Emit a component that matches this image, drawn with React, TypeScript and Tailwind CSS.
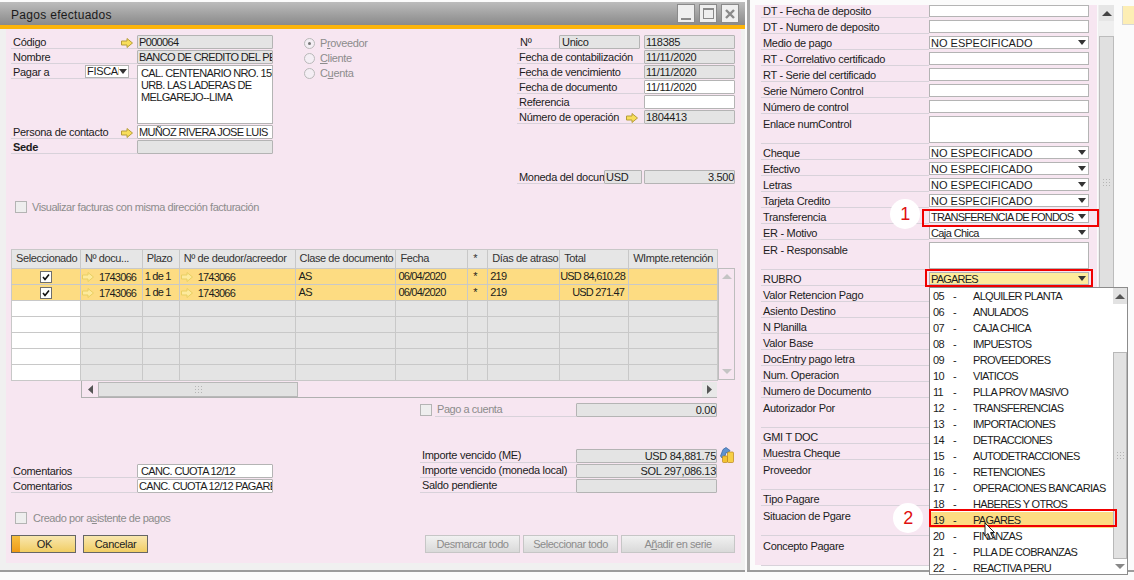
import React from "react";

const ink = "text-[#1c1c1c]";
const caps = "tracking-[-0.65px]";
const muted = "text-[#8c8c8c] tracking-[-0.45px]";

function Arrow({ pale }: { pale?: boolean }) {
  return (
    <svg width="12" height="10" viewBox="0 0 12 10" className="shrink-0">
      <path
        d="M0.5 3H6V0.5L11.5 5L6 9.5V7H0.5Z"
        fill={pale ? "#fdea9c" : "#f8de5a"}
        stroke={pale ? "#e8cf62" : "#b59d3a"}
      />
    </svg>
  );
}

function Caret() {
  return (
    <svg width="8" height="5" viewBox="0 0 8 5" className="shrink-0">
      <path d="M0 0H8L4 5Z" fill="#333" />
    </svg>
  );
}

function Field({ value, className, right }: { value?: string; className: string; right?: boolean }) {
  return (
    <div
      className={`h-[14px] border border-[#b4b4b4] rounded-[1px] leading-[12px] whitespace-nowrap overflow-hidden ${right ? "text-right" : "px-[1px]"} ${className}`}
    >
      {value}
    </div>
  );
}

function LeftRow({ label, value, bold, arrow, white }: { label: string; value?: string; bold?: boolean; arrow?: boolean; white?: boolean }) {
  return (
    <div className="flex h-[15px] items-end">
      <div className={`w-[126px] h-[15px] border-b border-[#d8d2da] flex items-center justify-between pl-[2px] pr-[4px] pt-[3px] ${bold ? "font-bold" : ""}`}>
        <span>{label}</span>
        {arrow && <Arrow />}
      </div>
      <Field value={value} className={`w-[136px] ${caps} ${white ? "bg-white" : "bg-[#e4e4e4]"}`} />
    </div>
  );
}

function InfoRow({ label, value, white, arrow }: { label: string; value?: string; white?: boolean; arrow?: boolean }) {
  return (
    <div className="flex h-[15px] items-end">
      <div className="w-[127px] h-[15px] border-b border-[#d8d2da] flex items-center justify-between pl-[2px] pr-[6px] pt-[3px] whitespace-nowrap">
        <span>{label}</span>
        {arrow && <Arrow />}
      </div>
      <Field value={value} className={`w-[91px] ${white ? "bg-white" : "bg-[#e4e4e4]"}`} />
    </div>
  );
}

function Radio({ label, on }: { label: React.ReactNode; on?: boolean }) {
  return (
    <div className="flex items-center h-[15px] gap-[5px] text-[#8c8c8c] tracking-[-0.35px]">
      <div className="w-[11px] h-[11px] rounded-full border border-[#b9b9b9] bg-[#f4eef4] flex items-center justify-center">
        {on && <div className="w-[3px] h-[3px] rounded-full bg-[#777]" />}
      </div>
      <span>{label}</span>
    </div>
  );
}

function Box({ checked }: { checked?: boolean }) {
  return (
    <div className={`w-[12px] h-[12px] border flex items-center justify-center ${checked ? "border-[#6e6e6e] bg-white" : "border-[#b4b4b4] bg-[#eeeeee]"}`}>
      {checked && (
        <svg width="8" height="8" viewBox="0 0 8 8">
          <path d="M1 4L3 6.5L7 1.5" fill="none" stroke="#111" strokeWidth="1.6" />
        </svg>
      )}
    </div>
  );
}

const cols = [
  { w: "w-[69px]", label: "Seleccionado", pad: "pl-[4px]" },
  { w: "w-[62px]", label: "Nº docu...", pad: "pl-[4px]" },
  { w: "w-[37px]", label: "Plazo", pad: "pl-[4px]" },
  { w: "w-[116px]", label: "Nº de deudor/acreedor", pad: "pl-[4px]" },
  { w: "w-[101px]", label: "Clase de documento", pad: "pl-[4px]" },
  { w: "w-[72px]", label: "Fecha", pad: "pl-[4px]" },
  { w: "w-[20px]", label: "*", pad: "pl-[5px]" },
  { w: "w-[72px]", label: "Días de atraso", pad: "pl-[4px]" },
  { w: "w-[69px]", label: "Total", pad: "pl-[4px]" },
  { w: "w-[89px]", label: "WImpte.retención", pad: "pl-[4px]" },
];

const rowsData = [
  { total: "USD 84,610.28" },
  { total: "USD 271.47" },
];

function PaymentsTable() {
  return (
    <div className="w-[707px] border-l border-t border-[#c8c8c8]">
      <div className="flex h-[19px] bg-[#e6e6e6] border-b border-[#c8c8c8] tracking-[-0.4px]">
        {cols.map((c) => (
          <div key={c.label} className={`${c.w} ${c.pad} border-r border-[#c8c8c8] leading-[17px] whitespace-nowrap overflow-hidden text-[#333]`}>
            {c.label}
          </div>
        ))}
      </div>
      {rowsData.map((r, i) => (
        <div key={i} className="flex h-[16px] bg-[#fddc82] border-b border-[#c8c8c8] leading-[14px] tracking-[-0.8px]">
          <div className="w-[69px] border-r border-[#c8c8c8] flex items-center justify-center"><Box checked /></div>
          <div className="w-[62px] border-r border-[#c8c8c8] flex items-center gap-[5px] pl-[1px]"><Arrow pale />1743066</div>
          <div className="w-[37px] border-r border-[#c8c8c8] pl-[2px]">1 de 1</div>
          <div className="w-[116px] border-r border-[#c8c8c8] flex items-center gap-[5px] pl-[1px]"><Arrow pale />1743066</div>
          <div className="w-[101px] border-r border-[#c8c8c8] pl-[3px]">AS</div>
          <div className="w-[72px] border-r border-[#c8c8c8] pl-[2px]">06/04/2020</div>
          <div className="w-[20px] border-r border-[#c8c8c8] pl-[5px]">*</div>
          <div className="w-[72px] border-r border-[#c8c8c8] pl-[2px]">219</div>
          <div className="w-[69px] border-r border-[#c8c8c8] text-right pr-[4px] whitespace-nowrap">{r.total}</div>
          <div className="w-[89px] border-r border-[#c8c8c8]" />
        </div>
      ))}
      {[0, 1, 2, 3, 4].map((i) => (
        <div key={i} className="flex h-[16px] bg-[#e4e4e4] border-b border-[#c8c8c8]">
          {cols.map((c, j) => (
            <div key={c.label} className={`${c.w} border-r border-[#c8c8c8] ${j === 0 ? "bg-white" : ""}`} />
          ))}
        </div>
      ))}
    </div>
  );
}

function Grip() {
  return (
    <svg width="7" height="7" viewBox="0 0 7 7">
      <path d="M0 0h1v1H0zM3 0h1v1H3zM6 0h1v1H6zM0 3h1v1H0zM3 3h1v1H3zM6 3h1v1H6zM0 6h1v1H0zM3 6h1v1H3zM6 6h1v1H6z" fill="#b5b5b5" />
    </svg>
  );
}

function Coins() {
  return (
    <svg width="14" height="16" viewBox="0 0 14 16" className="shrink-0 ml-[3px]">
      <path d="M0.5 9L3 2.5L6 0.5L10 3.5L8 6L6 5.5L5 9L2 11Z" fill="#5f93cf" stroke="#2f5f9e" strokeWidth="0.7" />
      <rect x="2.5" y="9" width="5" height="6.5" rx="1" fill="#f3c230" stroke="#b9851a" strokeWidth="0.7" />
      <rect x="7.5" y="5" width="6" height="10.5" rx="1" fill="#f7cf45" stroke="#b9851a" strokeWidth="0.7" />
    </svg>
  );
}

function GreyButton({ className, children }: { className: string; children: React.ReactNode }) {
  return (
    <div className={`h-[18px] border border-[#c6c6c6] bg-linear-to-b from-[#f1f1f1] to-[#d9d9d9] ${muted} flex items-center justify-center ${className}`}>
      {children}
    </div>
  );
}

function LeftWindow() {
  return (
    <div className="w-[745px] h-[570px] mt-[2px] flex flex-col border-b-2 border-[#9c9c9c] bg-[#f0f0f0]">
      <div className="h-[23px] shrink-0 bg-linear-to-b from-[#bcbcbc] to-[#8a8a8a] flex items-center justify-between pl-[11px] pr-[6px]">
        <span className="text-[12px] tracking-[0.3px] text-[#1a1a1a] pt-[3px]">Pagos efectuados</span>
        <div className="flex gap-[4px]">
          <div className="w-[18px] h-[19px] bg-[#efefef] border border-[#8a8a8a] flex items-end justify-center pb-[2px]">
            <div className="w-[10px] h-[2px] bg-[#8a8a8a]" />
          </div>
          <div className="w-[18px] h-[19px] bg-[#efefef] border border-[#8a8a8a] flex items-center justify-center">
            <div className="w-[11px] h-[11px] border border-[#8a8a8a] border-t-2" />
          </div>
          <div className="w-[18px] h-[19px] bg-[#efefef] border border-[#8a8a8a] flex items-center justify-center">
            <svg width="10" height="10" viewBox="0 0 10 10">
              <path d="M1 1L9 9M9 1L1 9" stroke="#8a8a8a" strokeWidth="2.4" />
            </svg>
          </div>
        </div>
      </div>
      <div className="h-[4px] shrink-0 bg-[#fbb40a]" />
      <div className="ml-[6px] w-[735px] h-[534px] bg-[#f7e6f1] pl-[5px] pt-[5px]">
        <div className="flex h-[120px]">
          <div className="w-[263px]">
            <LeftRow label="Código" value="P000064" arrow />
            <LeftRow label="Nombre" value="BANCO DE CREDITO DEL PERU" />
            <div className="flex h-[60px]">
              <div className="w-[126px] h-[15px] flex border-b border-[#d8d2da]">
                <span className="w-[74px] pl-[2px] pt-[1px] leading-[14px]">Pagar a</span>
                <div className="w-[44px] h-[13px] mt-[1px] bg-white border border-[#b4b4b4] flex items-center overflow-hidden pl-[1px] leading-[11px]">
                  <span className="w-[32px] overflow-hidden">FISCAL</span>
                  <Caret />
                </div>
              </div>
              <div className={`w-[136px] h-[59px] mt-[1px] bg-white border border-[#b4b4b4] pl-[3px] pt-[1px] leading-[12px] whitespace-nowrap overflow-hidden ${caps}`}>
                CAL. CENTENARIO NRO. 156<br />URB. LAS LADERAS DE<br />MELGAREJO--LIMA
              </div>
            </div>
            <LeftRow label="Persona de contacto" value="MUÑOZ RIVERA JOSE LUIS" arrow white />
            <LeftRow label="Sede" bold />
          </div>
          <div className="w-[243px] pl-[30px] pt-[2px]">
            <Radio on label={<>P<span className="underline">r</span>oveedor</>} />
            <Radio label={<><span className="underline">C</span>liente</>} />
            <Radio label={<>C<span className="underline">u</span>enta</>} />
          </div>
          <div className="w-[218px]">
            <div className="flex h-[15px] items-end">
              <div className="w-[42px] h-[15px] border-b border-[#d8d2da] pl-[3px] pt-[2px] leading-[13px]">Nº</div>
              <Field value="Unico" className="w-[81px] bg-[#e4e4e4] pl-[2px]" />
              <div className="w-[4px]" />
              <Field value="118385" className="w-[91px] bg-[#e4e4e4]" />
            </div>
            <InfoRow label="Fecha de contabilización" value="11/11/2020" />
            <InfoRow label="Fecha de vencimiento" value="11/11/2020" />
            <InfoRow label="Fecha de documento" value="11/11/2020" white />
            <InfoRow label="Referencia" white />
            <InfoRow label="Número de operación" value="1804413" arrow />
            <div className="flex h-[15px] items-end mt-[45px]">
              <div className="w-[87px] h-[15px] border-b border-[#d8d2da] pl-[2px] pt-[2px] whitespace-nowrap overflow-hidden leading-[13px]">Moneda del documento</div>
              <Field value="USD" className="w-[38px] bg-[#e4e4e4]" />
              <div className="w-[2px]" />
              <Field value="3.500" right className="w-[91px] bg-[#e4e4e4]" />
            </div>
          </div>
        </div>
        <div className={`flex items-center gap-[5px] pl-[4px] mt-[46px] h-[14px] ${muted}`}>
          <Box />
          <span>Visualizar facturas con misma dirección facturación</span>
        </div>
        <div className="flex mt-[35px]">
          <PaymentsTable />
          <div className="w-[17px] h-[112px] mt-[19px] border border-[#bdbdbd] flex flex-col items-center justify-between py-[5px]">
            <svg width="10" height="5" viewBox="0 0 10 5"><path d="M5 0L10 5H0Z" fill="#c4c4c4" /></svg>
            <svg width="10" height="5" viewBox="0 0 10 5"><path d="M0 0H10L5 5Z" fill="#c4c4c4" /></svg>
          </div>
        </div>
        <div className="ml-[70px] w-[636px] h-[17px] border-l border-b border-[#b0b0b0] flex items-center">
          <div className="w-[16px] flex justify-center">
            <svg width="5" height="9" viewBox="0 0 5 9"><path d="M5 0V9L0 4.5Z" fill="#555" /></svg>
          </div>
          <div className="w-[200px] h-[15px] bg-[#e2e2e2] border border-[#b8b8b8] flex items-center justify-center"><Grip /></div>
          <div className="flex-1" />
          <div className="w-[15px] h-[15px] bg-[#e8e8e8] flex items-center justify-center">
            <svg width="5" height="9" viewBox="0 0 5 9"><path d="M0 0V9L5 4.5Z" fill="#555" /></svg>
          </div>
        </div>
        <div className="flex h-[137px]">
          <div className="w-[409px] pt-[65px]">
            <div className="flex h-[15px] items-end">
              <div className="w-[126px] h-[15px] border-b border-[#d8d2da] pl-[2px] pt-[2px] leading-[13px]">Comentarios</div>
              <Field value="CANC. CUOTA 12/12" className={`w-[136px] bg-white pl-[3px] ${caps}`} />
            </div>
            <div className="flex h-[15px] items-end">
              <div className="w-[126px] h-[15px] border-b border-[#d8d2da] pl-[2px] pt-[2px] leading-[13px]">Comentarios</div>
              <Field value="CANC. CUOTA 12/12 PAGARES" className={`w-[136px] bg-white ${caps}`} />
            </div>
            <div className={`flex items-center gap-[6px] pl-[4px] mt-[18px] h-[14px] ${muted}`}>
              <Box />
              <span>Creado por a<span className="underline">s</span>istente de pagos</span>
            </div>
          </div>
          <div className="w-[320px] pt-[4px]">
            <div className="flex h-[15px] items-end">
              <div className="pb-[1px] w-[15px]"><Box /></div>
              <div className={`w-[141px] h-[15px] border-b border-[#d8d2da] pl-[2px] leading-[15px] ${muted}`}>Pago a cuenta</div>
              <Field value="0.00" right className="w-[141px] bg-[#e4e4e4]" />
            </div>
            <div className="flex h-[15px] items-end mt-[31px]">
              <div className="w-[156px] h-[15px] border-b border-[#d8d2da] pl-[2px] leading-[15px]">Importe vencido (ME)</div>
              <Field value="USD 84,881.75" right className="w-[141px] bg-[#e4e4e4]" />
              <Coins />
            </div>
            <div className="flex h-[15px] items-end">
              <div className="w-[156px] h-[15px] border-b border-[#d8d2da] pl-[2px] leading-[15px]">Importe vencido (moneda local)</div>
              <Field value="SOL 297,086.13" right className="w-[141px] bg-[#e4e4e4]" />
            </div>
            <div className="flex h-[15px] items-end">
              <div className="w-[156px] h-[15px] border-b border-[#d8d2da] pl-[2px] leading-[15px]">Saldo pendiente</div>
              <Field className="w-[141px] bg-[#e4e4e4]" />
            </div>
          </div>
        </div>
        <div className="flex pr-[6px]">
          <div className="relative w-[65px] h-[18px] border border-[#666] bg-linear-to-b from-[#f9e7ae] to-[#f1cd62] flex items-center justify-center pl-[2px] overflow-hidden">
            <div className="absolute left-0 top-0 bottom-0 w-[8px] bg-linear-to-b from-[#f6c040] to-[#ef9a12]" />
            <span className="relative">OK</span>
          </div>
          <div className="w-[65px] h-[18px] ml-[7px] border border-[#666] bg-linear-to-b from-[#f9e7ae] to-[#f1cd62] flex items-center justify-center">Cancelar</div>
          <div className="flex-1" />
          <GreyButton className="w-[95px]">Desmarcar todo</GreyButton>
          <GreyButton className="w-[95px] ml-[3px]">Seleccionar todo</GreyButton>
          <GreyButton className="w-[114px] ml-[3px]">A<span className="underline">ñ</span>adir en serie</GreyButton>
        </div>
      </div>
    </div>
  );
}

type UdfRow = { label: string; h: string; kind?: "text" | "tall" | "select" | "rubro"; value?: string; top?: boolean; first?: boolean; track?: string };

const udfRows: UdfRow[] = [
  { label: "DT - Fecha de deposito", h: "h-[13px]", kind: "text", first: true },
  { label: "DT - Numero de deposito", h: "h-[16px]", kind: "text" },
  { label: "Medio de pago", h: "h-[16px]", kind: "select", value: "NO ESPECIFICADO", track: "tracking-normal" },
  { label: "RT - Correlativo certificado", h: "h-[16px]", kind: "text" },
  { label: "RT - Serie del certificado", h: "h-[16px]", kind: "text" },
  { label: "Serie Número Control", h: "h-[16px]", kind: "text" },
  { label: "Número de control", h: "h-[16px]", kind: "text" },
  { label: "Enlace numControl", h: "h-[30px]", kind: "tall", top: true },
  { label: "Cheque", h: "h-[16px]", kind: "select", value: "NO ESPECIFICADO", track: "tracking-normal" },
  { label: "Efectivo", h: "h-[16px]", kind: "select", value: "NO ESPECIFICADO", track: "tracking-normal" },
  { label: "Letras", h: "h-[16px]", kind: "select", value: "NO ESPECIFICADO", track: "tracking-normal" },
  { label: "Tarjeta Credito", h: "h-[16px]", kind: "select", value: "NO ESPECIFICADO", track: "tracking-normal" },
  { label: "Transferencia", h: "h-[16px]", kind: "select", value: "TRANSFERENCIA DE FONDOS", track: "tracking-[-0.8px]" },
  { label: "ER - Motivo", h: "h-[16px]", kind: "select", value: "Caja Chica", track: "tracking-[-0.6px]" },
  { label: "ER - Responsable", h: "h-[30px]", kind: "tall", top: true },
  { label: "RUBRO", h: "h-[16px]", kind: "rubro", value: "PAGARES", track: "tracking-[-0.8px]" },
  { label: "Valor Retencion Pago", h: "h-[16px]" },
  { label: "Asiento Destino", h: "h-[16px]" },
  { label: "N Planilla", h: "h-[16px]" },
  { label: "Valor Base", h: "h-[16px]" },
  { label: "DocEntry pago letra", h: "h-[16px]" },
  { label: "Num. Operacion", h: "h-[16px]" },
  { label: "Numero de Documento", h: "h-[16px]" },
  { label: "Autorizador Por", h: "h-[30px]", top: true },
  { label: "GMI T DOC", h: "h-[16px]" },
  { label: "Muestra Cheque", h: "h-[16px]" },
  { label: "Proveedor", h: "h-[30px]", top: true },
  { label: "Tipo Pagare", h: "h-[16px]" },
  { label: "Situacion de Pgare", h: "h-[30px]", top: true },
  { label: "Concepto Pagare", h: "h-[30px]", top: true },
];

const rubroItems = [
  ["05", "ALQUILER PLANTA"],
  ["06", "ANULADOS"],
  ["07", "CAJA CHICA"],
  ["08", "IMPUESTOS"],
  ["09", "PROVEEDORES"],
  ["10", "VIATICOS"],
  ["11", "PLLA PROV MASIVO"],
  ["12", "TRANSFERENCIAS"],
  ["13", "IMPORTACIONES"],
  ["14", "DETRACCIONES"],
  ["15", "AUTODETRACCIONES"],
  ["16", "RETENCIONES"],
  ["17", "OPERACIONES BANCARIAS"],
  ["18", "HABERES Y OTROS"],
  ["19", "PAGARES"],
  ["20", "FINANZAS"],
  ["21", "PLLA DE COBRANZAS"],
  ["22", "REACTIVA PERU"],
];

function UdfField({ row }: { row: UdfRow }) {
  if (row.kind === "text" || row.kind === "tall") {
    return <div className="w-[160px] h-full bg-white border border-[#b4b4b4]" />;
  }
  return (
    <div className={`w-[160px] h-full border border-[#b4b4b4] flex items-center justify-between pl-[1px] pr-[2px] leading-[12px] whitespace-nowrap ${row.kind === "rubro" ? "bg-[#fdec9c]" : "bg-white"}`}>
      <span className={row.track}>{row.value}</span>
      <Caret />
    </div>
  );
}

function RubroDropdown() {
  return (
    <div className="absolute left-[182px] top-[287px] w-[199px] h-[288px] bg-white border border-[#8c8c8c] flex z-10">
      <div className="w-[183px]">
        {rubroItems.map(([code, name]) => (
          <div key={code} className={`flex h-[16px] items-center pl-[3px] whitespace-nowrap tracking-[-0.7px] ${code === "19" ? "bg-[#fddc82]" : ""}`}>
            <span className="w-[20px] shrink-0">{code}</span>
            <span className="w-[20px] shrink-0">-</span>
            <span>{name}</span>
          </div>
        ))}
      </div>
      <div className="w-[14px] flex flex-col bg-white">
        <div className="h-[16px] bg-[#e2e2e2] flex items-center justify-center">
          <svg width="10" height="5" viewBox="0 0 10 5"><path d="M5 0L10 5H0Z" fill="#555" /></svg>
        </div>
        <div className="h-[48px]" />
        <div className="h-[207px] bg-[#e2e2e2] border border-[#b8b8b8] flex items-center justify-center"><Grip /></div>
        <div className="flex-1 flex items-center justify-center">
          <svg width="10" height="5" viewBox="0 0 10 5"><path d="M0 0H10L5 5Z" fill="#888" /></svg>
        </div>
      </div>
    </div>
  );
}

function RightWindow() {
  return (
    <div className="relative w-[387px] h-[572px] ml-[2px] flex border-b-2 border-[#9c9c9c]">
      <div className="w-[3px] bg-[#a8a8a8]" />
      <div className="w-[5px]" />
      <div className="w-[342px] h-[560px] mt-[5px] bg-[#f7e6f1] pl-[6px]">
        {udfRows.map((row) => (
          <div key={row.label} className={`flex ${row.h}`}>
            <div className={`w-[168px] border-b border-[#d8d2da] pl-[2px] leading-[13px] ${row.first ? "" : row.top ? "pt-[4px]" : "pt-[3px]"}`}>
              <span>{row.label}</span>
            </div>
            {row.kind && (
              <div className={row.first ? "pb-[1px]" : "pt-[2px] pb-[1px]"}>
                <UdfField row={row} />
              </div>
            )}
          </div>
        ))}
      </div>
      <div className="w-[16px] h-[562px] mt-[5px] ml-[1px] pl-[1px] bg-[#efefef] flex flex-col">
        <div className="h-[16px] bg-[#e6e6e6] flex items-center justify-center">
          <svg width="10" height="5" viewBox="0 0 10 5"><path d="M5 0L10 5H0Z" fill="#444" /></svg>
        </div>
        <div className="h-[15px]" />
        <div className="flex-1 bg-[#e0e0e0] border border-[#bcbcbc] flex justify-center pt-[142px]"><Grip /></div>
      </div>
      <div className="w-[8px]" />
      <div className="w-[12px] h-[19px] mt-[6px] bg-[#fdeeb4] border-l border-b border-[#d8d8d8]" />

      <RubroDropdown />

      <div className="absolute left-[175px] top-[209px] w-[177px] h-[18px] border-2 border-[#f00000] z-20" />
      <div className="absolute left-[178px] top-[269px] w-[168px] h-[18px] border-2 border-[#f00000] z-20" />
      <div className="absolute left-[182px] top-[509px] w-[188px] h-[18px] border-2 border-[#f00000] z-20" />
      <div className="absolute left-[143px] top-[199px] w-[30px] h-[30px] rounded-full bg-white text-[#e01010] text-[18px] flex items-center justify-center z-20">1</div>
      <div className="absolute left-[146px] top-[503px] w-[30px] h-[30px] rounded-full bg-white text-[#e01010] text-[18px] flex items-center justify-center z-20">2</div>
      <svg width="14" height="22" viewBox="0 0 14 22" className="absolute left-[237px] top-[522px] z-30">
        <path d="M1 1V14L4 11.5L6.5 17L9 16L6.5 10.5H10.5Z" fill="#fff" stroke="#111" strokeWidth="0.9" />
        <path d="M6 17H12V13" fill="none" stroke="#666" strokeWidth="0.8" />
      </svg>
    </div>
  );
}

export default function App() {
  return (
    <div className={`w-[1134px] h-[580px] bg-[#fbfbfb] flex items-start overflow-hidden font-['Liberation_Sans',sans-serif] text-[11px] tracking-[-0.3px] ${ink}`}>
      <LeftWindow />
      <RightWindow />
    </div>
  );
}
